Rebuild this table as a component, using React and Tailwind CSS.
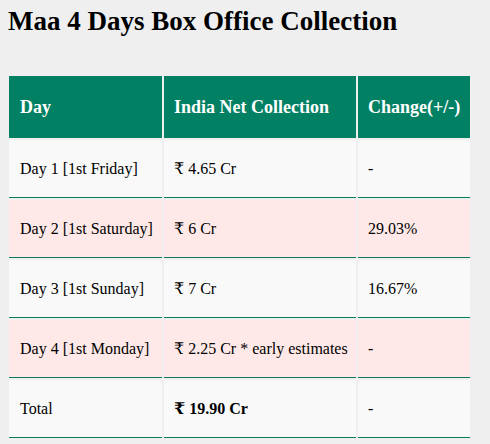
export default function App() {
  const rows = [
    { day: 'Day 1 [1st Friday]', net: '₹ 4.65 Cr', change: '-' },
    { day: 'Day 2 [1st Saturday]', net: '₹ 6 Cr', change: '29.03%' },
    { day: 'Day 3 [1st Sunday]', net: '₹ 7 Cr', change: '16.67%' },
    { day: 'Day 4 [1st Monday]', net: '₹ 2.25 Cr * early estimates', change: '-' },
  ];

  const serif = "font-['Liberation_Serif','DejaVu_Serif',serif]";

  return (
    <div className={`min-h-[444px] bg-[#efefef] px-2 pt-[6px] text-black ${serif}`}>
      <h1 className={`text-[27px] font-bold leading-[31px] ${serif}`}>Maa 4 Days Box Office Collection</h1>

      <table className={`mt-[37px] ml-[-1px] w-[465px] table-fixed border-separate border-spacing-[2px] text-left text-[16px] whitespace-nowrap ${serif}`}>
        <colgroup>
          <col className="w-[153px]" />
          <col className="w-[192px]" />
          <col className="w-[112px]" />
        </colgroup>
        <thead>
          <tr className="bg-[#018063] text-white">
            <th className={`h-[62px] px-[11px] text-[18px] font-bold ${serif}`}>Day</th>
            <th className={`h-[62px] px-[10px] text-[18px] font-bold ${serif}`}>India Net Collection</th>
            <th className={`h-[62px] px-[10px] text-[18px] font-bold ${serif}`}>Change(+/-)</th>
          </tr>
        </thead>
        <tbody>
          {rows.map((r, i) => (
            <tr key={r.day} className={i % 2 === 1 ? 'bg-[#ffe9e8]' : 'bg-[#f9f9f9]'}>
              <td className={`h-[58px] border-b border-[#0b7a5c] px-[11px] ${serif}`}>{r.day}</td>
              <td className={`h-[58px] border-b border-[#0b7a5c] px-[10px] ${serif}`}>{r.net}</td>
              <td className={`h-[58px] border-b border-[#0b7a5c] px-[10px] ${serif}`}>{r.change}</td>
            </tr>
          ))}
          <tr className="bg-[#f9f9f9]">
            <td className={`h-[58px] border-b border-[#0b7a5c] px-[11px] ${serif}`}>Total</td>
            <td className={`h-[58px] border-b border-[#0b7a5c] px-[10px] font-bold ${serif}`}>₹ 19.90 Cr</td>
            <td className={`h-[58px] border-b border-[#0b7a5c] px-[10px] ${serif}`}>-</td>
          </tr>
        </tbody>
      </table>
    </div>
  );
}
